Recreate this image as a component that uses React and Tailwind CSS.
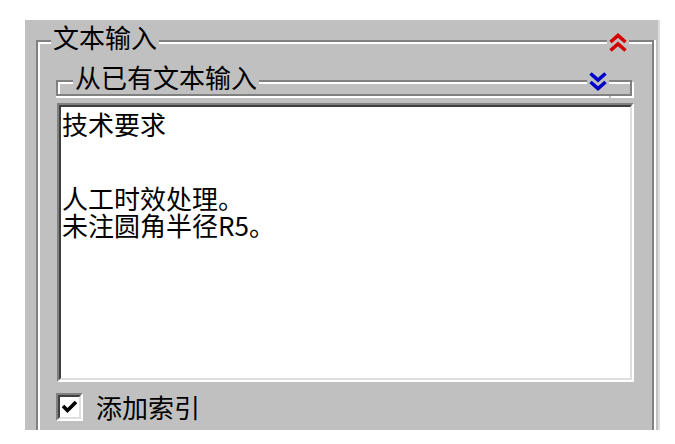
import React from 'react';

const font = { fontFamily: '"Noto Sans CJK SC", "Noto Sans", sans-serif' };

const UpChevrons = () => (
  <svg width="20" height="21" viewBox="0 0 20 21" className="mx-[1px] mt-[8px] shrink-0">
    <path d="M2.5 10 L10 3.5 L17.5 10" fill="none" stroke="#d40000" strokeWidth="3.6" />
    <path d="M2.5 18.5 L10 12 L17.5 18.5" fill="none" stroke="#d40000" strokeWidth="3.6" />
  </svg>
);

const DownChevrons = () => (
  <svg width="20" height="21" viewBox="0 0 20 21" className="mx-[1px] mt-[7px] shrink-0">
    <path d="M2.5 2.5 L10 9 L17.5 2.5" fill="none" stroke="#0000c8" strokeWidth="3.6" />
    <path d="M2.5 11 L10 17.5 L17.5 11" fill="none" stroke="#0000c8" strokeWidth="3.6" />
  </svg>
);

const App = () => {
  return (
    <div className="w-[675px] h-[444px] bg-white pt-[20px] pl-[25px]" style={font}>
      <div className="w-[635px] h-[410px] bg-[#c0c0c0] pl-[11px] pt-[4px] flex flex-col border-r-2 border-[#dcdcdc]">
        {/* outer group header */}
        <div className="flex items-start h-[26px] w-[618px]">
          <div className="w-[15px] h-[10px] mt-[16px] border-t-2 border-l-2 border-[#808080] shadow-[inset_2px_2px_0_#fff]" />
          <span className="px-[2px] text-[26px] leading-[26px] text-black whitespace-nowrap">文本输入</span>
          <div className="flex-1 h-[4px] mt-[16px] border-t-2 border-[#808080] bg-white" />
          <UpChevrons />
          <div className="w-[25px] h-[10px] mt-[16px] border-t-2 border-r-2 border-[#808080] shadow-[inset_0_2px_0_#fff,2px_0_0_#fff]" />
        </div>

        {/* outer group body */}
        <div className="w-[618px] flex-1 min-h-0 border-l-2 border-r-2 border-[#808080] shadow-[inset_2px_0_0_#fff,2px_0_0_#fff] pl-[18px] pt-[14px]">
          <div className="w-[578px] flex flex-col">
            {/* inner group header box */}
            <div className="flex items-start h-[32px] w-[576px]">
              <div className="w-[17px] h-[16px] mt-[16px] border-t-2 border-l-2 border-b-2 border-[#808080] shadow-[inset_2px_2px_0_#fff,0_2px_0_#fff]" />
              <div className="h-[32px] px-[2px] border-b-2 border-[#808080] shadow-[0_2px_0_#fff]">
                <span className="block text-[26px] leading-[26px] text-black whitespace-nowrap">从已有文本输入</span>
              </div>
              <div className="flex-1 h-[16px] mt-[16px] border-t-2 border-b-2 border-[#808080] shadow-[inset_0_2px_0_#fff,0_2px_0_#fff]" />
              <div className="h-[32px] border-b-2 border-[#808080] shadow-[0_2px_0_#fff]">
                <DownChevrons />
              </div>
              <div className="w-[23px] h-[16px] mt-[16px] border-t-2 border-r-2 border-b-2 border-[#808080] shadow-[inset_0_2px_0_#fff,2px_2px_0_#fff]" />
            </div>

            {/* text area */}
            <div className="ml-[1px] mt-[7px] w-[577px] h-[279px] border-2 border-t-[#808080] border-l-[#808080] border-b-[#fff] border-r-[#fff]">
              <div className="w-full h-full bg-white border-2 border-t-[#404040] border-l-[#404040] border-b-[#dfdfdf] border-r-[#dfdfdf] pl-[1px] pt-[3px] text-[26px] leading-[27px] text-black">
                <div>技术要求</div>
                <div className="h-[47px]" />
                <div>人工时效处理。</div>
                <div>未注圆角半径R5。</div>
              </div>
            </div>

            {/* checkbox row */}
            <div className="flex items-center h-[29px] mt-[10px]">
              <div className="w-[27px] h-[28px] border-2 border-t-[#808080] border-l-[#808080] border-b-[#fff] border-r-[#fff]">
                <div className="w-full h-full bg-white border-2 border-t-[#404040] border-l-[#404040] border-b-[#dfdfdf] border-r-[#dfdfdf] flex items-center justify-center">
                  <svg width="17" height="15" viewBox="0 0 17 15">
                    <path d="M2 7 L6.5 11.5 L15 3" fill="none" stroke="#000" strokeWidth="3.6" />
                  </svg>
                </div>
              </div>
              <span className="ml-[13px] text-[26px] leading-[29px] text-black whitespace-nowrap">添加索引</span>
            </div>
          </div>
        </div>
      </div>
    </div>
  );
};

export default App;
